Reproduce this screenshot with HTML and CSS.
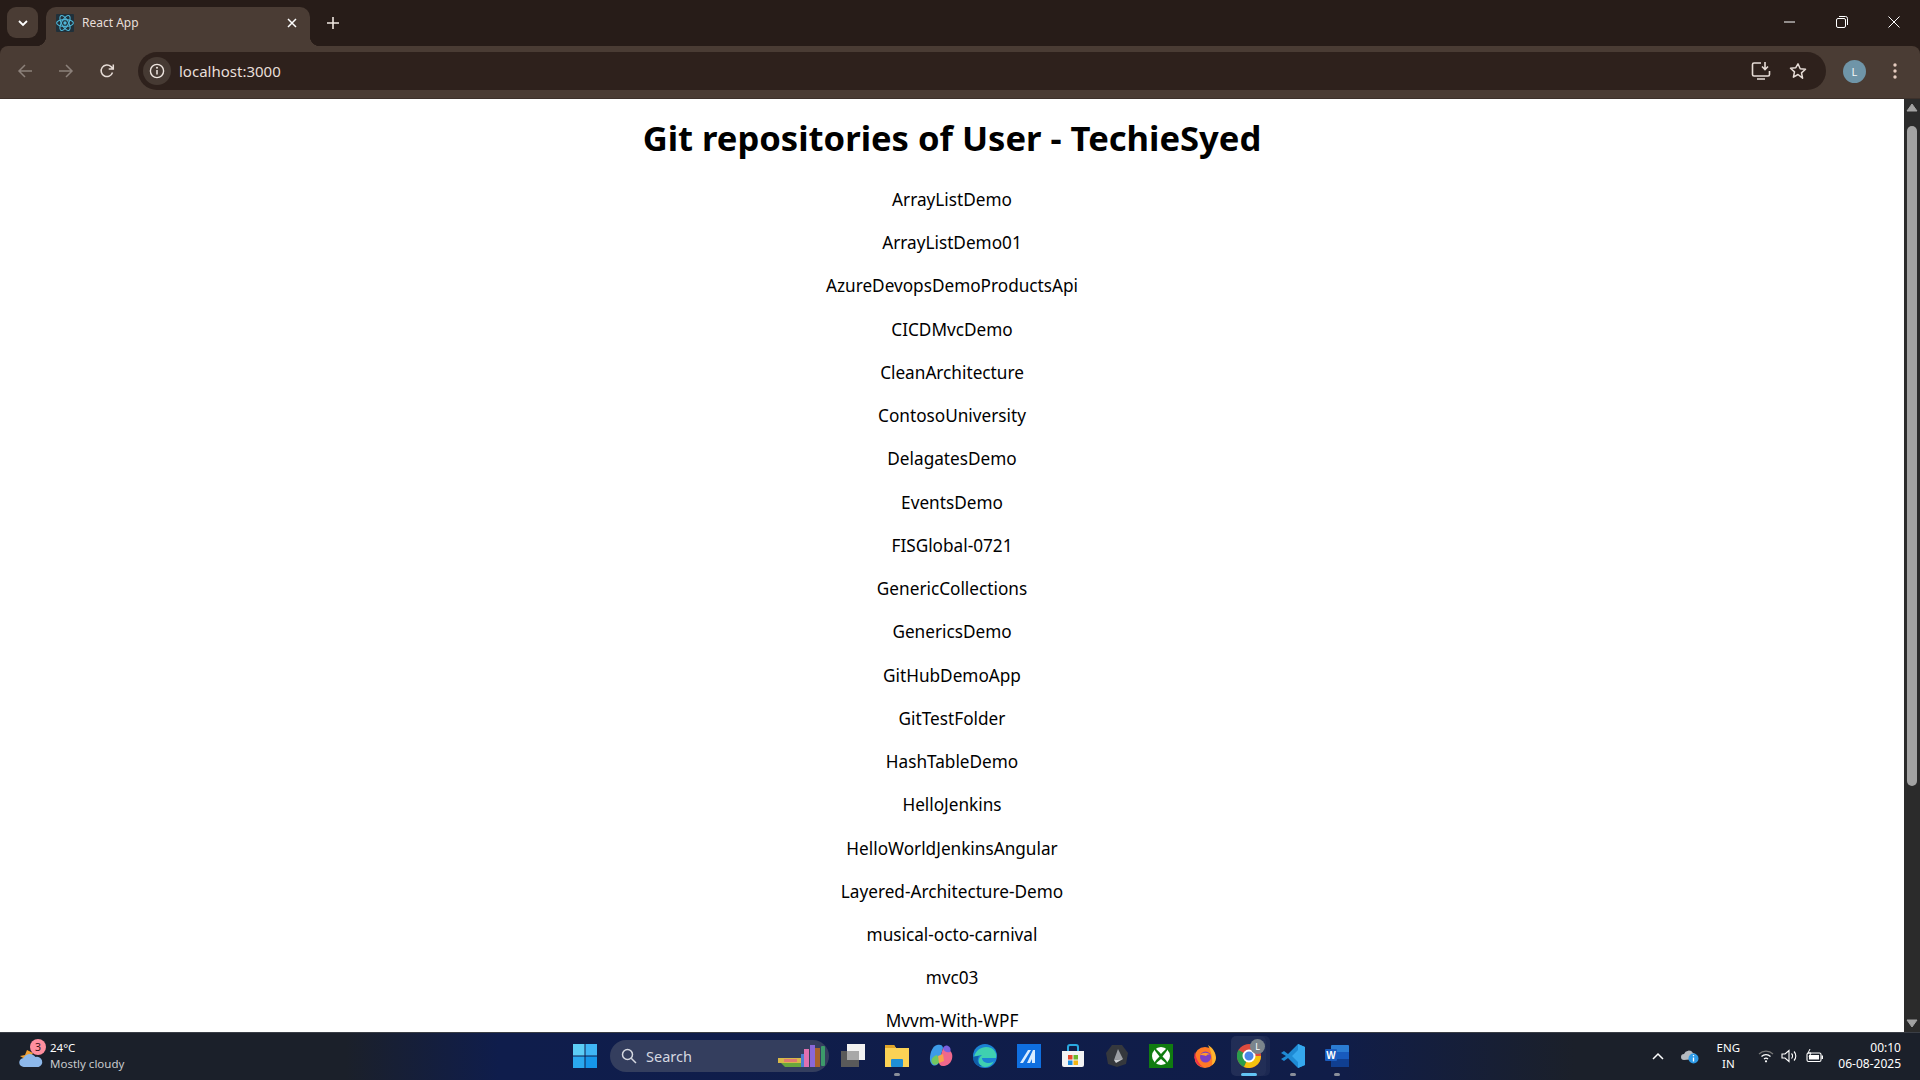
FILE: index.html
```html
<!DOCTYPE html>
<html lang="en">
<head>
<meta charset="utf-8">
<title>React App</title>
<link rel="stylesheet" href="styles.css">
</head>
<body>
<div class="tabstrip">
  <button class="tabsearch"><svg width="12" height="12" viewBox="0 0 12 12"><path d="M2 4l4 4 4-4" fill="none" stroke="#fff" stroke-width="1.8"/></svg></button>
  <div class="tab">
    <svg class="favicon" width="18" height="18" viewBox="0 0 18 18"><rect width="18" height="18" rx="1" fill="#20303a"/><g fill="none" stroke="#4fb6d6" stroke-width="1.1"><ellipse cx="9" cy="9" rx="8.4" ry="3.4"/><ellipse cx="9" cy="9" rx="8.4" ry="3.4" transform="rotate(60 9 9)"/><ellipse cx="9" cy="9" rx="8.4" ry="3.4" transform="rotate(120 9 9)"/></g><circle cx="9" cy="9" r="1.7" fill="#4fb6d6"/></svg>
    <span class="tabtitle">React App</span>
    <svg class="tabclose" width="10" height="10" viewBox="0 0 10 10"><path d="M1 1l8 8M9 1l-8 8" stroke="#fff" stroke-width="1.5"/></svg>
  </div>
  <svg class="newtab" width="14" height="14" viewBox="0 0 14 14"><path d="M7 1v12M1 7h12" stroke="#efe6e0" stroke-width="1.6"/></svg>
  <div class="wincontrols">
    <svg width="12" height="12" viewBox="0 0 12 12"><path d="M0 6h11" stroke="#fff" stroke-width="1"/></svg>
    <svg width="12" height="12" viewBox="0 0 12 12"><rect x=".5" y="2.5" width="9" height="9" rx="1.5" fill="none" stroke="#fff"/><path d="M3 .5h6.5a2 2 0 0 1 2 2V9" fill="none" stroke="#fff"/></svg>
    <svg width="12" height="12" viewBox="0 0 12 12"><path d="M.5.5l11 11M11.5.5l-11 11" stroke="#fff" stroke-width="1"/></svg>
  </div>
</div>
<div class="toolbar">
  <svg class="navicon" width="16" height="16" viewBox="0 0 16 16"><path d="M15 8H2M8 2L2 8l6 6" fill="none" stroke="#8c817a" stroke-width="1.5"/></svg>
  <svg class="navicon" width="16" height="16" viewBox="0 0 16 16"><path d="M1 8h13M8 2l6 6-6 6" fill="none" stroke="#8c817a" stroke-width="1.5"/></svg>
  <svg class="navicon" width="16" height="16" viewBox="0 0 16 16"><path d="M13.5 9.5A5.8 5.8 0 1 1 12 3.6L14 5.6M14.3 1.5v4.6H9.7" fill="none" stroke="#e6dcd6" stroke-width="1.5"/></svg>
  <div class="omnibox">
    <span class="siteinfo"><svg width="16" height="16" viewBox="0 0 16 16"><circle cx="8" cy="8" r="6.6" fill="none" stroke="#efe6e0" stroke-width="1.4"/><path d="M8 7v4.5" stroke="#efe6e0" stroke-width="1.5"/><circle cx="8" cy="4.8" r="1" fill="#efe6e0"/></svg></span>
    <span class="url">localhost:3000</span>
    <svg class="omniicon" width="20" height="20" viewBox="0 0 20 20"><path d="M10 2H3a1.500 1.500 0 0 0-1.500 1.500v10A1.500 1.500 0 0 0 3 15h14a1.500 1.500 0 0 0 1.500-1.500V10M6 18h8" fill="none" stroke="#e6dcd6" stroke-width="1.6"/><path d="M14 1v7M11 5.500l3 3 3-3" fill="none" stroke="#e6dcd6" stroke-width="1.6"/></svg>
    <svg class="omniicon" width="18" height="18" viewBox="0 0 18 18"><path d="M9 1.800l2.200 4.900 5.300.6-4 3.600 1.100 5.300L9 12.500l-4.600 2.700 1.100-5.300-4-3.600 5.300-.6z" fill="none" stroke="#e6dcd6" stroke-width="1.5" stroke-linejoin="round"/></svg>
  </div>
  <span class="avatar">L</span>
  <svg class="menu" width="4" height="16" viewBox="0 0 4 16"><circle cx="2" cy="2" r="1.700" fill="#e6ccc0"/><circle cx="2" cy="8" r="1.700" fill="#e6ccc0"/><circle cx="2" cy="14" r="1.700" fill="#e6ccc0"/></svg>
</div>
<div class="viewport">
  <main class="page">
    <h1>Git repositories of User - TechieSyed</h1>
    <p>ArrayListDemo</p>
    <p>ArrayListDemo01</p>
    <p>AzureDevopsDemoProductsApi</p>
    <p>CICDMvcDemo</p>
    <p>CleanArchitecture</p>
    <p>ContosoUniversity</p>
    <p>DelagatesDemo</p>
    <p>EventsDemo</p>
    <p>FISGlobal-0721</p>
    <p>GenericCollections</p>
    <p>GenericsDemo</p>
    <p>GitHubDemoApp</p>
    <p>GitTestFolder</p>
    <p>HashTableDemo</p>
    <p>HelloJenkins</p>
    <p>HelloWorldJenkinsAngular</p>
    <p>Layered-Architecture-Demo</p>
    <p>musical-octo-carnival</p>
    <p>mvc03</p>
    <p>Mvvm-With-WPF</p>
  </main>
  <div class="scrollbar">
    <svg width="12" height="9" viewBox="0 0 12 9"><path d="M6 1l5 7H1z" fill="#a3a3a3" stroke="#a3a3a3" stroke-linejoin="round"/></svg>
    <div class="thumb"></div>
    <svg width="12" height="9" viewBox="0 0 12 9"><path d="M6 8l5-7H1z" fill="#a3a3a3" stroke="#a3a3a3" stroke-linejoin="round"/></svg>
  </div>
</div>
<footer class="taskbar">
  <div class="weather">
    <span class="wicon">
      <svg width="26" height="26" viewBox="0 0 26 26"><path d="M2 13l5-1 2-5 6 3-5 8z" fill="#f0a030"/><path d="M6 24a4.500 4.500 0 0 1-.5-9 7 7 0 0 1 12-1 5 5 0 0 1 3 10z" fill="#8db8ea"/></svg>
      <span class="wbadge">3</span>
    </span>
    <span class="wtext"><span class="wtemp">24°C</span><span class="wdesc">Mostly cloudy</span></span>
  </div>
  <div class="apps">
    <span class="app"><svg width="24" height="24" viewBox="0 0 24 24"><rect x="0" y="0" width="11.500" height="11.500" fill="#5ccdf5"/><rect x="12.500" y="0" width="11.500" height="11.500" fill="#3fb5f5"/><rect x="0" y="12.500" width="11.500" height="11.500" fill="#2aa8ee"/><rect x="12.500" y="12.500" width="11.500" height="11.500" fill="#1596ea"/></svg></span>
    <div class="search">
      <svg width="16" height="16" viewBox="0 0 16 16"><circle cx="6.500" cy="6.500" r="5" fill="none" stroke="#d5d8e0" stroke-width="1.500"/><path d="M10.200 10.200l4.800 4.800" stroke="#d5d8e0" stroke-width="1.500"/></svg>
      <span class="searchtext">Search</span>
      <svg class="books" width="50" height="24" viewBox="0 0 50 24"><path d="M1 14h23v5H1z" fill="#d8b848"/><path d="M4 19h20v4H8z" fill="#6aa83c"/><rect x="7" y="15" width="13" height="3" fill="#e07a70"/><rect x="24" y="10" width="3" height="13" fill="#4a7fd0"/><rect x="27" y="5" width="5" height="18" fill="#e070b0"/><rect x="33" y="1" width="5" height="22" fill="#8a68d8"/><rect x="38" y="4" width="5" height="19" fill="#a8622c"/><rect x="44" y="2" width="4" height="20" rx="1" fill="#3c9a6a"/></svg>
    </div>
    <span class="app"><svg width="24" height="24" viewBox="0 0 24 24"><rect x="6" y="0" width="18" height="16" fill="#f2f2f2"/><rect x="0" y="7" width="18" height="16" fill="#5a5a5a"/><rect x="6" y="7" width="12" height="9" fill="#a8a8a8"/></svg></span>
    <span class="app dotted"><svg width="24" height="24" viewBox="0 0 24 24"><path d="M0 1h9l2 3h13v19H0z" fill="#fbd255"/><path d="M0 1h9l2 3H0z" fill="#e0a52a"/><rect x="6" y="15" width="12" height="8" rx="1" fill="#1f8fd6"/></svg></span>
    <span class="app"><svg width="24" height="24" viewBox="0 0 24 24"><path d="M8 1c3-1 6 0 6 3l-4 14c-1 4-6 5-8 1C0 16 1 8 4 4c1-2 2-2 4-3z" fill="#3d9be8"/><path d="M10 18l4-14 5 2c4 1 5 5 4 9-2 6-6 7-9 7-3 0-4-2-4-4z" fill="#f0688c"/><path d="M14 4c1-2 3-3 5-2 3 1 3 5 2 6-3 1-6 0-7-4z" fill="#7a60e0"/><path d="M3 19c-2-3 1-7 5-8l3 6c-2 4-6 5-8 2z" fill="#72c860"/><path d="M9 12l5-2 1 7-5 2z" fill="#f7a34c"/></svg></span>
    <span class="app"><svg width="24" height="24" viewBox="0 0 24 24"><circle cx="12" cy="12" r="12" fill="#1b82d4"/><path d="M1 13C3 4 12 1 18 4c4 2 6 6 5 10H9c0 3 3 5 7 5 2 0 4-1 5-2-2 4-5 6-9 6-2 0-5-1-6-4-1-3 0-6 3-8-3 0-6 1-8 2z" fill="#3fd0b0"/><path d="M6 12c-2 3-2 8 3 10-5 1-9-3-9-9 2-1 4-1 6-1z" fill="#0f5ea8"/></svg></span>
    <span class="app"><svg width="24" height="24" viewBox="0 0 24 24"><rect width="24" height="24" fill="#0f6fe0"/><path d="M3 19L11 6h3L6 19zM10 19l6-13h2v13h-3v-4l-2 4z" fill="#d8ecff"/></svg></span>
    <span class="app"><svg width="24" height="24" viewBox="0 0 24 24"><path d="M1 7h22v14a2 2 0 0 1-2 2H3a2 2 0 0 1-2-2z" fill="#f3f3f3"/><path d="M7 7V3a2 2 0 0 1 2-2h6a2 2 0 0 1 2 2v4" fill="none" stroke="#29a8e0" stroke-width="2"/><rect x="7" y="11" width="4.500" height="4.500" fill="#e8492c"/><rect x="12.500" y="11" width="4.500" height="4.500" fill="#6cb82c"/><rect x="7" y="16.500" width="4.500" height="4.500" fill="#1a8ce0"/><rect x="12.500" y="16.500" width="4.500" height="4.500" fill="#f5b512"/></svg></span>
    <span class="app"><svg width="24" height="24" viewBox="0 0 24 24"><path d="M7 1h10l6 8-2 11-9 3-9-3L1 9z" fill="#35383d"/><path d="M13 5l5 10-9 1z" fill="#9a9da2"/><path d="M9 16l9-1-7 4z" fill="#d0d2d6"/></svg></span>
    <span class="app"><svg width="24" height="24" viewBox="0 0 24 24"><rect width="24" height="24" fill="#107c10"/><circle cx="12" cy="12" r="9" fill="#fff"/><path d="M5 4c3 1 5 4 7 6 2-2 4-5 7-6-1 4-4 6-5.500 8.500C16 15 19 18 19 21l-7-6-7 6c0-3 3-6 5.500-8.500C9 10 6 8 5 4z" fill="#107c10"/></svg></span>
    <span class="app"><svg width="24" height="24" viewBox="0 0 24 24"><circle cx="12" cy="13.500" r="10.500" fill="#ff7a26"/><path d="M15 1c5 3 8 8 8 13 0 3-2 6-4 7 1-7-1-14-4-20z" fill="#ffb52e"/><path d="M2 8c-2 6 1 14 8 15-4-3-7-8-8-15z" fill="#f0304c"/><circle cx="12.500" cy="13" r="5.500" fill="#7b3fc4"/><path d="M7 11c3-3 8-3 10 0-2-1-3 0-4 1-2-1-4-1-6-1z" fill="#ff9a2e"/></svg></span>
    <span class="app active">
      <svg class="chromeicon" width="24" height="24" viewBox="0 0 24 24"><circle cx="12" cy="12" r="12" fill="#dd4b3e"/><path d="M12 12L1.500 6A12 12 0 0 0 7 22.900z" fill="#2a9d4a"/><path d="M12 12h12A12 12 0 0 1 7 22.900z" fill="#f4c20d"/><circle cx="12" cy="12" r="5.500" fill="#4a86e8" stroke="#fff" stroke-width="2"/></svg>
      <span class="chromebadge">L</span>
    </span>
    <span class="app dotted"><svg width="24" height="24" viewBox="0 0 24 24"><path d="M17 0l7 3v18l-7 3L7 14l-4 3-3-2 5-3-5-3 3-2 4 3z" fill="#1e8ad4"/><path d="M17 0l7 3v18l-7 3zM17 6l-6 6 6 6z" fill="#35a8ee"/></svg></span>
    <span class="app dotted"><svg width="24" height="24" viewBox="0 0 24 24"><rect x="6" y="1" width="18" height="22" rx="1" fill="#2b7cd3"/><rect x="6" y="8" width="18" height="7" fill="#185abd"/><rect x="6" y="15" width="18" height="8" fill="#103f91"/><rect x="0" y="5" width="12" height="12" rx="1" fill="#1a5cbe"/><text class="wordw" x="6" y="14.500" text-anchor="middle">W</text></svg></span>
  </div>
  <div class="tray">
    <svg class="trayup" width="12" height="8" viewBox="0 0 12 8"><path d="M1 7l5-5 5 5" fill="none" stroke="#fff" stroke-width="1.500"/></svg>
    <svg class="traycloud" width="18" height="16" viewBox="0 0 18 16"><path d="M3 12a3 3 0 0 1 0-6 5 5 0 0 1 9-1 3.500 3.500 0 0 1 2 6z" fill="#b5bac0"/><circle cx="12.500" cy="10.500" r="5" fill="#2e9be8"/><path d="M12.500 9.500v4M12.500 7v1.300" stroke="#fff" stroke-width="1.300"/></svg>
    <span class="lang"><span>ENG</span><span>IN</span></span>
    <svg class="trayglyph" width="16" height="14" viewBox="0 0 16 14"><path d="M1 5a10 10 0 0 1 14 0" fill="none" stroke="#777" stroke-width="1.200"/><path d="M3.500 7.500a6.500 6.500 0 0 1 9 0M6 10a3 3 0 0 1 4 0" fill="none" stroke="#fff" stroke-width="1.200"/><circle cx="8" cy="12.300" r="1.100" fill="#fff"/></svg>
    <svg class="trayglyph" width="18" height="14" viewBox="0 0 18 14"><path d="M1 5h3l4-3.500v11L4 9H1z" fill="none" stroke="#fff" stroke-width="1.100"/><path d="M10.500 4.500a3.500 3.500 0 0 1 0 5M13 2.500a6.500 6.500 0 0 1 0 9" fill="none" stroke="#fff" stroke-width="1.100"/></svg>
    <svg class="trayglyph" width="18" height="14" viewBox="0 0 18 14"><rect x="1" y="4" width="14" height="8.500" rx="1.500" fill="none" stroke="#fff" stroke-width="1.100"/><rect x="3" y="6" width="10" height="4.500" fill="#fff"/><rect x="15.500" y="6.500" width="1.500" height="3.500" fill="#fff"/><path d="M4 0L2 4h3L3 8" fill="none" stroke="#fff" stroke-width="1"/></svg>
    <span class="clock"><span>00:10</span><span>06-08-2025</span></span>
  </div>
</footer>
</body>
</html>
```

FILE: styles.css
```css
* { box-sizing: border-box; }
html, body { margin: 0; height: 100%; overflow: hidden; }
body {
  display: flex;
  flex-direction: column;
  height: 1080px;
  font-family: "Noto Sans", "Open Sans", sans-serif;
  background: #271c18;
}
svg { display: block; flex: none; }

.tabstrip { height: 46px; display: flex; align-items: flex-start; padding: 7px 0 0 7px; background: #271c18; flex: none; }
.tabsearch { width: 31px; height: 31px; border: 0; padding: 0; border-radius: 9px; background: #4a3c34; display: flex; align-items: center; justify-content: center; }
.tab { position: relative; width: 264px; height: 39px; margin-left: 8px; padding: 0 0 8px 10px; background: #4a3c34; border-radius: 10px 10px 0 0; display: flex; align-items: center; color: #e8dfd9; font-size: 12px; }
.tab::before, .tab::after { content: ""; position: absolute; bottom: 0; width: 10px; height: 10px; }
.tab::before { left: -10px; background: radial-gradient(circle at 0 0, transparent 10px, #4a3c34 10.500px); }
.tab::after { right: -10px; background: radial-gradient(circle at 100% 0, transparent 10px, #4a3c34 10.500px); }
.favicon { margin-left: 0; }
.tabtitle { margin-left: 8px; flex: 1; }
.tabclose { margin-right: 13px; }
.newtab { margin: 9px 0 0 16px; }
.wincontrols { margin-left: auto; display: flex; gap: 40px; padding: 9px 20px 0 0; align-items: center; width: 170px; justify-content: flex-end; }

.toolbar { height: 53px; flex: none; background: #4a3c34; border-radius: 8px 8px 0 0; border-bottom: 1px solid #3d312b; display: flex; align-items: center; padding: 0 0 2px 17px; }
.navicon { margin-right: 25px; }
.navicon + .navicon + .navicon { margin-right: 0; margin-left: 0; }
.omnibox { margin-left: 23px; width: 1688px; height: 38px; border-radius: 19px; background: #2e211c; display: flex; align-items: center; padding-left: 5px; }
.siteinfo { width: 28px; height: 28px; border-radius: 50%; background: #463a33; display: flex; align-items: center; justify-content: center; }
.url { margin-left: 8px; flex: 1; color: #e8dfd9; font-size: 15px; }
.omniicon { margin-right: 20px; }
.omniicon + .omniicon { margin-right: 19px; margin-left: -2px; }
.avatar { width: 23px; height: 23px; margin-left: 17px; border-radius: 50%; background: #6f95a8; color: #f2f5f6; font-size: 11px; display: flex; align-items: center; justify-content: center; }
.menu { margin-left: 27px; }

.viewport { flex: 1; min-height: 0; display: flex; background: #fff; }
.page { flex: 1; min-width: 0; overflow: hidden; text-align: center; color: #000; font-size: 17.200px; }
h1 { margin: 15px 0 26px; font-size: 34.600px; line-height: 48px; font-weight: 700; }
.page p { margin: 0 0 19.240px; line-height: 24px; }

.scrollbar { width: 16px; flex: none; background: #2b2b2b; display: flex; flex-direction: column; align-items: center; padding: 4px 0; }
.thumb { width: 10px; height: 660px; margin: 14px 0 auto; border-radius: 5px; background: #a3a3a3; }

.taskbar { height: 48px; flex: none; display: flex; align-items: center; padding-bottom: 2px; color: #fff; border-top: 1px solid #3a3e46; background: linear-gradient(90deg, #1b202a 0%, #1b202a 18%, #0f1d4c 26%, #101d48 70%, #1b202a 82%, #1b202a 100%); }
.weather { width: 563px; display: flex; align-items: center; padding-left: 18px; flex: none; }
.wicon { position: relative; width: 26px; height: 26px; }
.wbadge { position: absolute; right: -2px; top: -4px; width: 16px; height: 16px; border-radius: 50%; background: #ff8f9f; color: #3a1218; font-size: 10.500px; line-height: 16px; text-align: center; }
.wtext { margin-left: 6px; display: flex; flex-direction: column; font-size: 11.500px; line-height: 16px; }
.wdesc { color: #c8cacd; }
.apps { display: flex; align-items: center; flex: none; }
.app { position: relative; width: 44px; height: 40px; display: flex; align-items: center; justify-content: center; }
.app.dotted::after, .app.active::after { content: ""; position: absolute; bottom: 0; left: 50%; width: 6px; height: 3px; margin-left: -3px; border-radius: 2px; background: #8a8f9a; }
.app.active::before { content: ""; position: absolute; top: 0; bottom: 0; left: 4px; right: 5px; border-radius: 5px; background: rgba(255,255,255,.08); box-shadow: 4px 0 0 rgba(255,255,255,.05); }
.app.active::after { width: 16px; margin-left: -8px; background: #62c4f5; }
.chromeicon { position: relative; }
.chromebadge { position: absolute; top: 3px; right: 6px; width: 15px; height: 15px; border-radius: 50%; background: #7b858c; color: #fff; font-size: 9px; line-height: 15px; text-align: center; }
.wordw { fill: #fff; font-size: 10px; font-weight: 700; font-family: "Liberation Sans", sans-serif; }
.search { position: relative; width: 219px; height: 32px; margin: 0 2px 0 3px; padding-left: 11px; border-radius: 16px; background: #343e5e; display: flex; align-items: center; overflow: hidden; }
.searchtext { margin-left: 9px; font-size: 14.500px; color: #d5d8e0; flex: 1; }
.books { margin-right: 2px; }
.tray { margin-left: auto; display: flex; align-items: center; padding-right: 19px; }
.trayup { margin-right: 17px; }
.traycloud { margin-right: 14px; }
.lang { width: 30px; display: flex; flex-direction: column; align-items: center; font-size: 11.500px; line-height: 16px; margin-right: 15px; }
.trayglyph { margin-right: 7px; }
.clock { margin-left: 7px; display: flex; flex-direction: column; align-items: flex-end; font-size: 12px; line-height: 16px; }
```
